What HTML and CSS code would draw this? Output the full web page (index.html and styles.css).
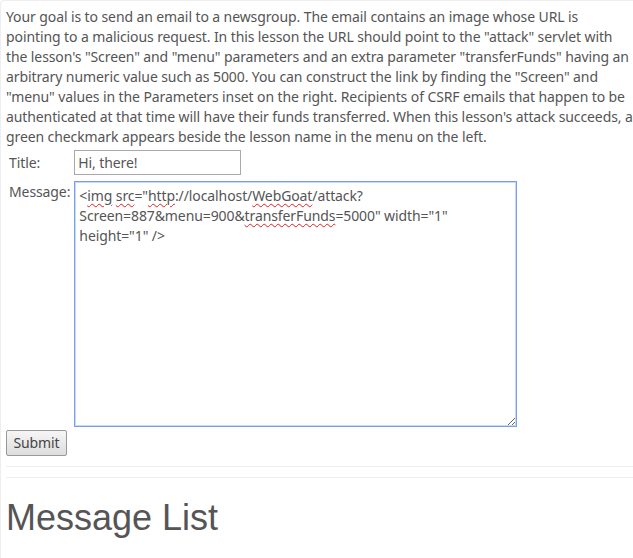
FILE: index.html
```html
<!DOCTYPE html>
<html lang="en">
<head>
    <meta charset="UTF-8">
    <title>CSRF</title>
    <link rel="stylesheet" href="styles.css">
</head>
<body>
    <div class="panel">
        <p class="intro">Your goal is to send an email to a newsgroup. The email contains an image whose URL is pointing to a malicious request. In this lesson the URL should point to the "attack" servlet with the lesson's "Screen" and "menu" parameters and an extra parameter "transferFunds" having an arbitrary numeric value such as 5000. You can construct the link by finding the "Screen" and "menu" values in the Parameters inset on the right. Recipients of CSRF emails that happen to be authenticated at that time will have their funds transferred. When this lesson's attack succeeds, a green checkmark appears beside the lesson name in the menu on the left.</p>
        <form>
            <table class="form-table">
                <tr class="row-title">
                    <td class="label">Title:</td>
                    <td><input class="title-input" type="text" value="Hi, there!"></td>
                </tr>
                <tr class="row-message">
                    <td class="label">Message:</td>
                    <td>
                        <div class="message-box">&lt;<span class="typo">img</span> <span class="typo">src</span>="<span class="typo">http</span>://localhost/<span class="typo">WebGoat</span>/attack?<br>Screen=887&amp;menu=900&amp;<span class="typo">transferFunds</span>=5000" width="1"<br>height="1" /&gt;</div>
                    </td>
                </tr>
            </table>
            <button class="submit" type="button">Submit</button>
        </form>
        <hr>
        <hr>
        <h1>Message List</h1>
    </div>
</body>
</html>
```

FILE: styles.css
```css
body {
    margin: 0;
    background: #fff;
    font-family: "Noto Sans", "Noto Sans CJK KR", sans-serif;
    font-size: 14px;
    line-height: 20px;
    letter-spacing: -0.1px;
    color: #555;
}
.panel {
    border: 1px solid #eee;
    border-right: none;
    border-bottom: none;
    border-radius: 4px 0 0 0;
    padding: 6px 0 0 5px;
    min-height: 560px;
}
.intro {
    margin: 0;
}
.form-table {
    border-spacing: 2px;
}
.form-table td {
    padding: 1px;
}
.row-title td {
    vertical-align: middle;
}
.row-message td {
    vertical-align: top;
    padding-top: 3px;
}
.label {
    width: 60px;
    padding-right: 2px;
    white-space: nowrap;
}
.row-message .label {
    padding-top: 4px;
}
.title-input {
    display: block;
    width: 167px;
    height: 25px;
    box-sizing: border-box;
    border: 1px solid #a9a9a9;
    padding: 1px 3px;
    font: inherit;
    letter-spacing: inherit;
    color: #555;
}
.message-box {
    width: 443px;
    height: 246px;
    box-sizing: border-box;
    border: 1px solid #7a9fe6;
    box-shadow: 0 0 0 1px #c8d8f5 inset;
    padding: 4px;
    resize: both;
    overflow: auto;
    color: #555;
}
.typo {
    text-decoration: underline wavy #e02020;
    text-decoration-thickness: 1px;
    text-underline-offset: 2px;
}
.submit {
    display: block;
    width: 61px;
    height: 26px;
    font: inherit;
    letter-spacing: inherit;
    color: #444;
    border: 1px solid #999;
    border-radius: 2px;
    background: linear-gradient(#f6f6f6, #dddddd);
    padding: 0;
}
hr {
    border: 0;
    border-top: 1px solid #eee;
    margin: 10px 0 0 0;
}
h1 {
    font-family: "Liberation Sans", Arial, sans-serif;
    font-size: 36px;
    font-weight: 500;
    line-height: 1.1;
    letter-spacing: 0;
    color: #555;
    margin: 20px 0 0 0;
}
```
